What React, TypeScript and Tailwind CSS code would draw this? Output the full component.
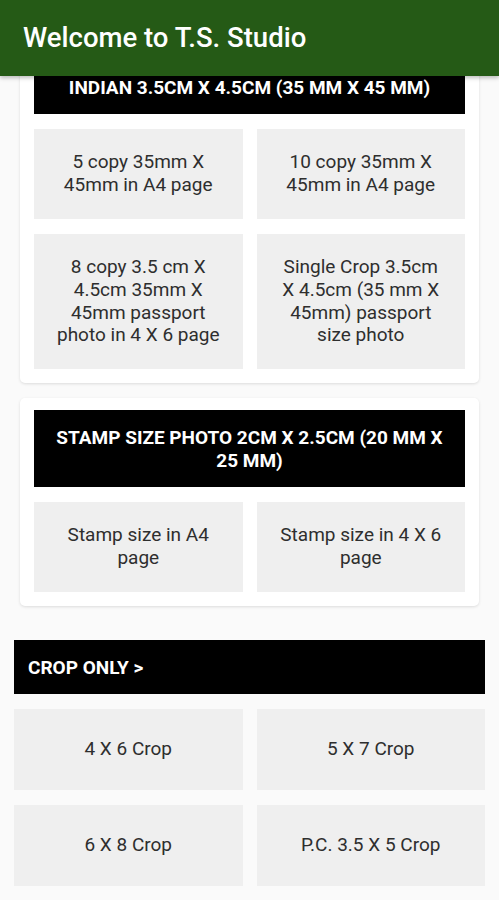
import React from 'react';

const INDIAN = [
  ['5 copy 35mm X 45mm in A4 page', 'h-[90px]'],
  ['10 copy 35mm X 45mm in A4 page', 'h-[90px]'],
  ['8 copy 3.5 cm X 4.5cm 35mm X 45mm passport photo in 4 X 6 page', 'h-[135px]'],
  ['Single Crop 3.5cm X 4.5cm (35 mm X 45mm) passport size photo', 'h-[135px]'],
];

const STAMP = ['Stamp size in A4 page', 'Stamp size in 4 X 6 page'];

const CROPS = ['4 X 6 Crop', '5 X 7 Crop', '6 X 8 Crop', 'P.C. 3.5 X 5 Crop'];

function Cell({ label, className = '' }: { label: string; className?: string }) {
  return (
    <div
      className={`bg-[#efefef] flex items-center justify-center text-center px-5 text-[19px] leading-[22.7px] text-[#2e2e2e] ${className}`}
    >
      {label}
    </div>
  );
}

function Bar({ children, left = false }: { children: React.ReactNode; left?: boolean }) {
  return (
    <div
      className={`bg-black text-white font-bold text-[19px] leading-[23px] py-[15.5px] ${
        left ? 'px-[14px] text-left' : 'px-4 text-center'
      }`}
    >
      {children}
    </div>
  );
}

export default function App() {
  return (
    <div
      className="w-[499px] h-[900px] overflow-hidden bg-[#fafafa] flex flex-col"
      style={{ fontFamily: 'Roboto, "Noto Sans", sans-serif' }}
    >
      <header className="relative z-10 h-[76px] shrink-0 bg-[#255a16] flex items-center px-[23px] shadow-[0_2px_4px_rgba(0,0,0,0.25)]">
        <h1 className="text-white text-[27.5px] font-medium">Welcome to T.S. Studio</h1>
      </header>

      <main className="flex-1 overflow-hidden">
        {/* Indian size card, partly scrolled under the header */}
        <section className="mx-[20px] -mt-[30px] bg-white rounded-[5px] shadow-[0_1px_3px_rgba(0,0,0,0.12)] p-[14px]">
          <Bar>INDIAN 3.5CM X 4.5CM (35 MM X 45 MM)</Bar>
          <div className="grid grid-cols-2 gap-x-[14px] gap-y-[15px] mt-[15px]">
            {INDIAN.map(([label, h]) => (
              <Cell key={label} label={label} className={h} />
            ))}
          </div>
        </section>

        <section className="mx-[20px] mt-[15px] bg-white rounded-[5px] shadow-[0_1px_3px_rgba(0,0,0,0.12)] px-[14px] pt-[12px] pb-[14px]">
          <Bar>STAMP SIZE PHOTO 2CM X 2.5CM (20 MM X 25 MM)</Bar>
          <div className="grid grid-cols-2 gap-x-[14px] mt-[15px]">
            {STAMP.map((label) => (
              <Cell key={label} label={label} className="h-[90px]" />
            ))}
          </div>
        </section>

        <section className="mx-[14px] mt-[34px]">
          <Bar left>CROP ONLY &gt;</Bar>
          <div className="grid grid-cols-2 gap-x-[14px] gap-y-[15px] mt-[15px]">
            {CROPS.map((label) => (
              <Cell key={label} label={label} className="h-[81px]" />
            ))}
          </div>
        </section>
      </main>
    </div>
  );
}
